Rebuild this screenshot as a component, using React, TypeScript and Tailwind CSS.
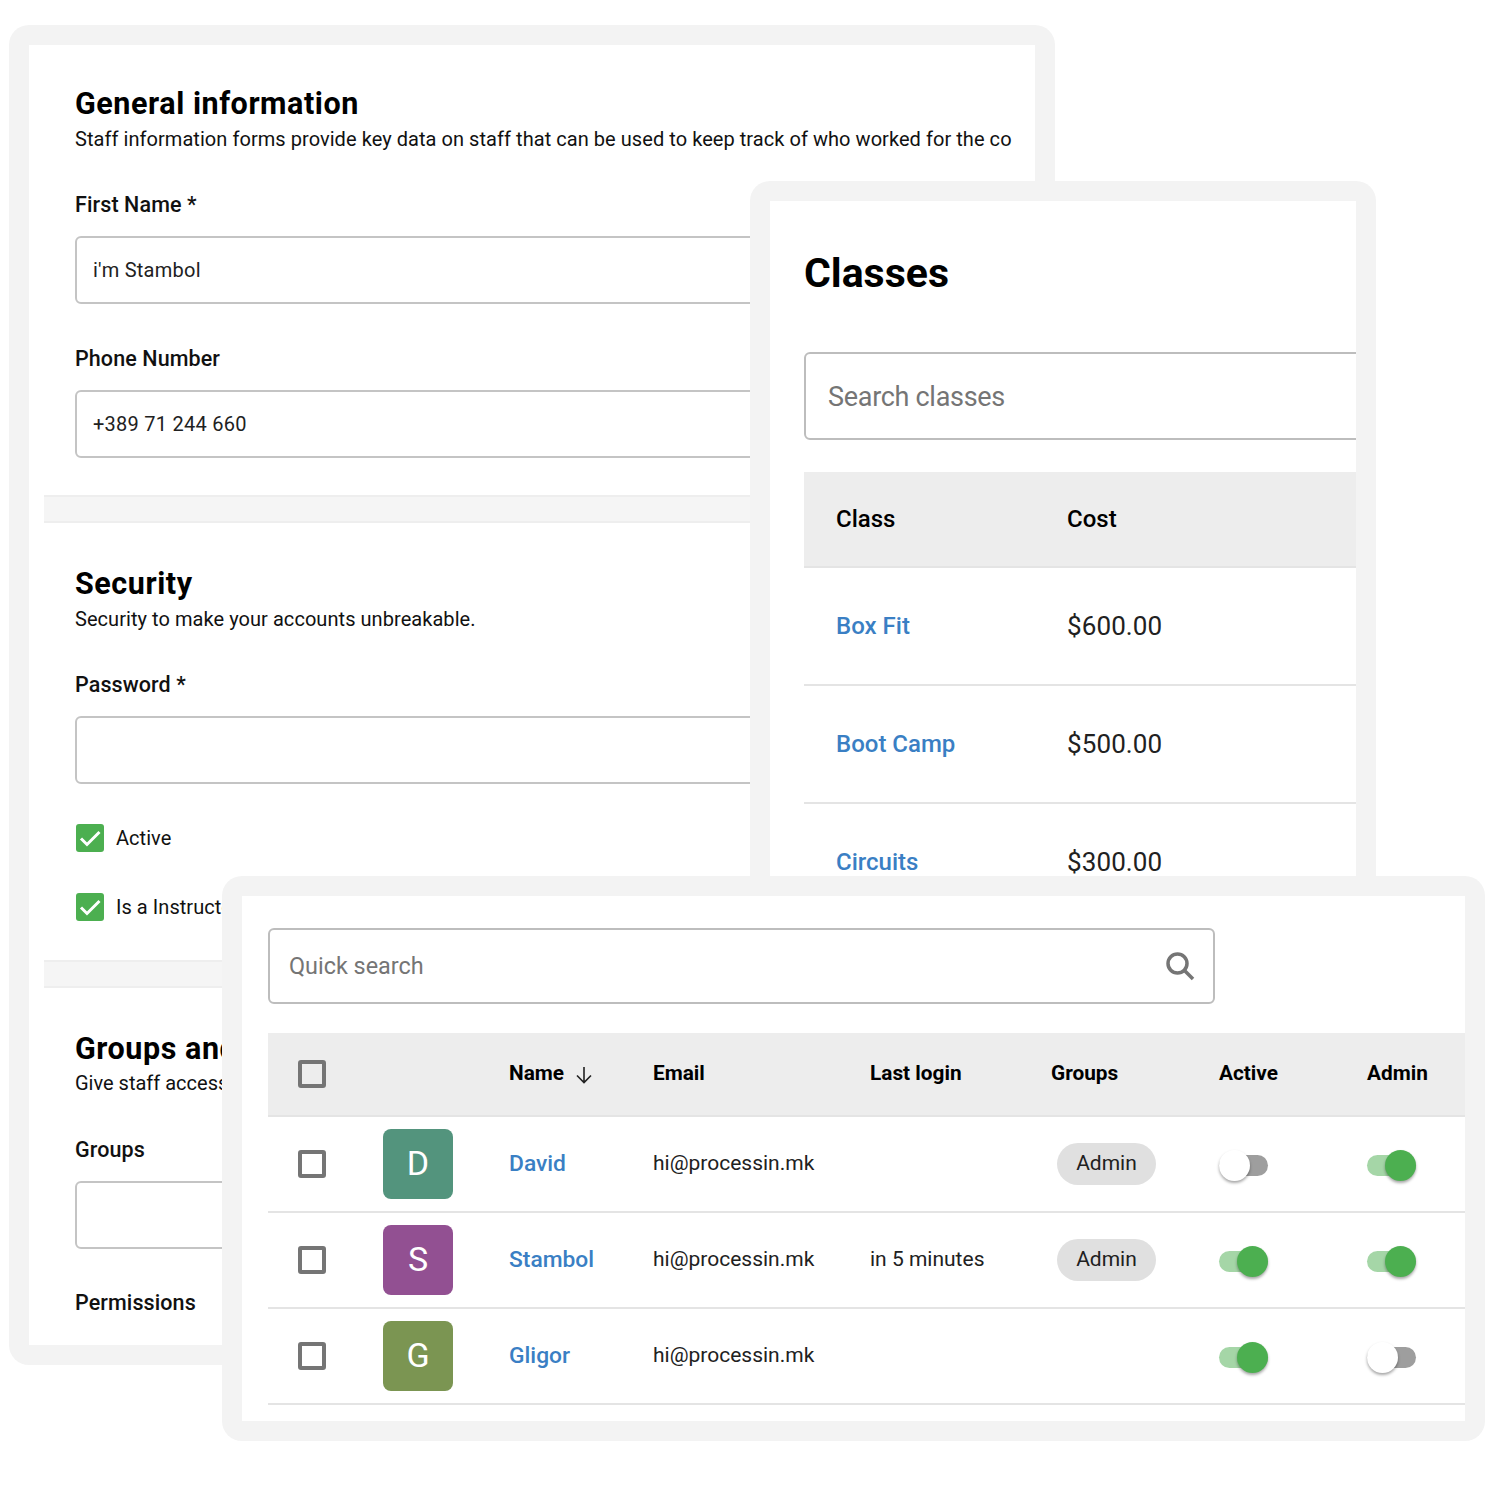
import React from "react";

const Check = () => (
  <span className="flex h-[28px] w-[28px] items-center justify-center rounded-[3px] bg-[#4caf50]">
    <svg viewBox="0 0 28 28" className="h-[28px] w-[28px]" fill="none" stroke="#fff" strokeWidth="3">
      <path d="M5 14.5 L11 20.5 L23.5 8" />
    </svg>
  </span>
);

const Box = () => <span className="block h-[28px] w-[28px] rounded-[3px] border-[4px] border-[#757575]" />;

const Input = ({ value }: { value?: string }) => (
  <div className="flex h-[68px] w-[960px] items-center rounded-[6px] border-2 border-[#c4c4c4] pl-[16px] text-[20px] tracking-[0.25px] text-[#212121]">{value}</div>
);

const Label = ({ children, className }: { children: React.ReactNode; className: string }) => (
  <div className={`text-[21.5px] leading-[26px] font-medium tracking-[0.1px] text-[#111] ${className}`}>{children}</div>
);

const Divider = ({ className }: { className: string }) => (
  <div className={`h-[28px] border-y-2 border-[#eeeeee] bg-[#f5f5f5] ${className}`} />
);

const Toggle = ({ on }: { on: boolean }) => (
  <span className="relative block h-[21px] w-[49px] translate-y-[1px]">
    <span className={`absolute inset-0 rounded-full ${on ? "bg-[#a5d6a7]" : "bg-[#9e9e9e]"}`} />
    <span
      className={`absolute top-[-5px] h-[31px] w-[31px] rounded-full shadow-[0_2px_3px_rgba(0,0,0,0.35)] ${on ? "right-0 bg-[#4caf50]" : "left-0 bg-white"}`}
    />
  </span>
);

const rows = [
  { l: "D", c: "bg-[#53947d]", n: "David", login: "", g: true, a: false, ad: true },
  { l: "S", c: "bg-[#925092]", n: "Stambol", login: "in 5 minutes", g: true, a: true, ad: true },
  { l: "G", c: "bg-[#7b9552]", n: "Gligor", login: "", g: false, a: true, ad: false },
];

const classes = [
  ["Box Fit", "$600.00"],
  ["Boot Camp", "$500.00"],
  ["Circuits", "$300.00"],
];

export default function App() {
  return (
    <div className="relative h-[1500px] w-[1500px] overflow-hidden bg-white [font-family:Roboto,sans-serif]">
      {/* General window */}
      <section className="absolute left-[9px] top-[25px] h-[1340px] w-[1046px] rounded-[20px] bg-[#f3f3f3] p-[20px]">
        <div className="h-[1300px] overflow-hidden bg-white pl-[15px] pr-[22px]">
          <div className="pl-[31px]">
            <h2 className="pt-[41px] text-[30.5px] leading-[36px] font-bold tracking-[0.55px] text-black">General information</h2>
            <p className="mt-[2px] whitespace-nowrap text-[20px] leading-[30px] tracking-[0.055px] text-[#111]">
              Staff information forms provide key data on staff that can be used to keep track of who worked for the co
            </p>
            <Label className="mt-[38px]">First Name *</Label>
            <div className="mt-[18px]"><Input value="i'm Stambol" /></div>
            <Label className="mt-[42px]">Phone Number</Label>
            <div className="mt-[18px]"><Input value="+389 71 244 660" /></div>
          </div>
          <Divider className="mt-[37px]" />
          <div className="pl-[31px]">
            <h2 className="pt-[43px] text-[30.5px] leading-[36px] font-bold tracking-[0.55px] text-black">Security</h2>
            <p className="mt-[2px] text-[20px] leading-[30px] tracking-[0.055px] text-[#111]">Security to make your accounts unbreakable.</p>
            <Label className="mt-[38px]">Password *</Label>
            <div className="mt-[18px]"><Input /></div>
            <div className="mt-[40px] flex h-[28px] items-center gap-[12px] pl-[1px] text-[20px] tracking-[0.05px] text-[#111]"><Check />Active</div>
            <div className="mt-[41px] flex h-[28px] items-center gap-[12px] pl-[1px] text-[20px] tracking-[0.05px] text-[#111]"><Check />Is a Instructor</div>
          </div>
          <Divider className="mt-[39px]" />
          <div className="pl-[31px]">
            <h2 className="pt-[43px] text-[30.5px] leading-[36px] font-bold tracking-[0.55px] text-black">Groups and permissions</h2>
            <p className="mt-[1px] text-[20px] leading-[30px] text-[#111]">Give staff access</p>
            <Label className="mt-[39px]">Groups</Label>
            <div className="mt-[18px]"><Input /></div>
            <Label className="mt-[41px]">Permissions</Label>
          </div>
        </div>
      </section>

      {/* Classes window */}
      <section className="absolute left-[750px] top-[181px] h-[760px] w-[626px] rounded-[20px] bg-[#f3f3f3] p-[20px]">
        <div className="h-[720px] overflow-hidden bg-white pl-[34px]">
          <h2 className="pt-[48px] text-[41px] leading-[48px] font-bold text-black">Classes</h2>
          <div className="mt-[55px] flex h-[88px] w-[640px] items-center rounded-[6px] border-2 border-[#bdbdbd] pl-[22px] pt-[2px] text-[27px] tracking-[-0.3px] text-[#757575]">
            Search classes
          </div>
          <div className="mt-[32px] grid h-[96px] grid-cols-[231px_1fr] items-center border-b-2 border-[#e4e4e4] bg-[#ededed] pl-[32px] text-[24px] font-medium text-black">
            <span>Class</span>
            <span>Cost</span>
          </div>
          {classes.map(([n, c]) => (
            <div key={n} className="grid h-[118px] grid-cols-[231px_1fr] items-center border-b-2 border-[#e4e4e4] pl-[32px] text-[26px]">
              <span className="text-[24px] font-medium text-[#3a7fc4]">{n}</span>
              <span className="tracking-[0.1px] text-[#212121]">{c}</span>
            </div>
          ))}
        </div>
      </section>

      {/* Users window */}
      <section className="absolute left-[222px] top-[876px] h-[565px] w-[1263px] rounded-[20px] bg-[#f3f3f3] p-[20px]">
        <div className="h-[525px] overflow-hidden bg-white pl-[26px]">
          <div className="pt-[32px]">
            <div className="flex h-[76px] w-[947px] items-center justify-between rounded-[6px] border-2 border-[#bdbdbd] pl-[19px] pr-[18px] text-[23.4px] text-[#757575]">
              <span className="pt-[2px]">Quick search</span>
              <svg viewBox="0 0 30 30" className="h-[30px] w-[30px]" fill="none" stroke="#757575" strokeWidth="3.5">
                <circle cx="12.5" cy="12.5" r="9.5" />
                <path d="M19.5 19.5 L28 28" />
              </svg>
            </div>
          </div>
          <div className="mt-[29px] grid h-[84px] grid-cols-[115px_126px_144px_217px_181px_168px_148px_1fr] items-center border-b-2 border-[#e4e4e4] bg-[#ededed] text-[20.8px] font-bold text-black">
            <span className="pl-[30px]"><Box /></span>
            <span />
            <span className="flex items-center gap-[11px] pb-[1px]">
              Name
              <svg viewBox="0 0 18 18" className="mt-[3px] h-[18px] w-[18px]" fill="none" stroke="#212121" strokeWidth="1.6">
                <path d="M9 1 V16 M2 9.5 L9 16.5 L16 9.5" />
              </svg>
            </span>
            <span className="pb-[1px]">Email</span>
            <span className="pb-[1px]">Last login</span>
            <span className="pb-[1px]">Groups</span>
            <span className="pb-[1px]">Active</span>
            <span className="pb-[1px]">Admin</span>
          </div>
          {rows.map((r) => (
            <div key={r.n} className="grid h-[96px] grid-cols-[115px_126px_144px_217px_181px_168px_148px_1fr] items-center border-b-2 border-[#e4e4e4] text-[21px] text-[#212121]">
              <span className="pl-[30px]"><Box /></span>
              <span className={`flex h-[70px] w-[70px] items-center justify-center rounded-[8px] pb-[2px] text-[34px] text-white ${r.c}`}>{r.l}</span>
              <span className="text-[22.8px] font-medium text-[#3a7fc4]">{r.n}</span>
              <span>hi@processin.mk</span>
              <span>{r.login}</span>
              <span>
                {r.g && (
                  <span className="ml-[6px] inline-flex h-[42px] w-[99px] items-center justify-center rounded-full bg-[#e0e0e0]">Admin</span>
                )}
              </span>
              <span><Toggle on={r.a} /></span>
              <span><Toggle on={r.ad} /></span>
            </div>
          ))}
        </div>
      </section>
    </div>
  );
}
